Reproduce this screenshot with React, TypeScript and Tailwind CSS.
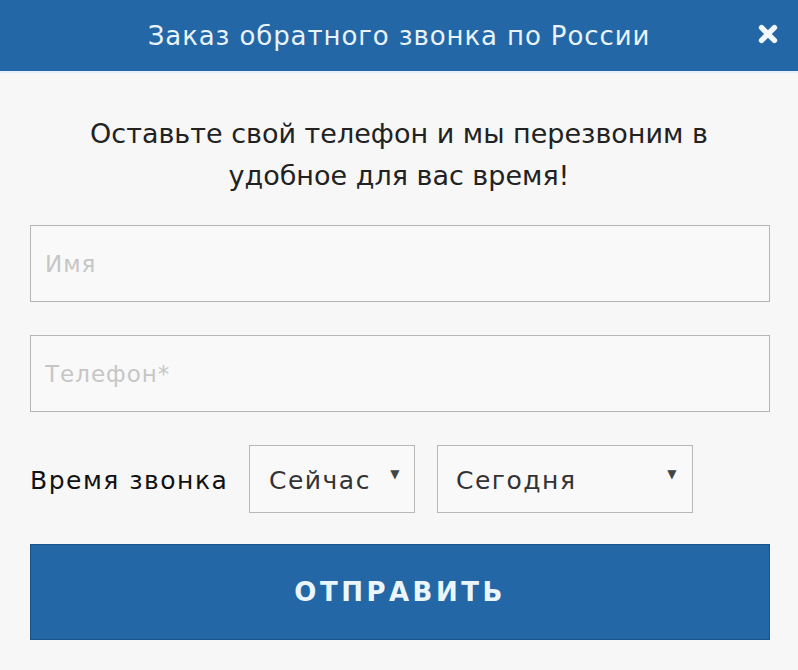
export default function App() {
  return (
    <div className="w-[798px] h-[670px] bg-[#f7f7f7] font-['DejaVu_Sans',sans-serif]">
      <div className="h-[73px] bg-[#2467a6] border-b-2 border-[#e4f1f8] flex items-center justify-center relative">
        <h1 className="text-[#e8f3f8] text-[26px] tracking-[0.9px] pt-[2px]">
          Заказ обратного звонка по России
        </h1>
        <button className="absolute right-[18px] top-[22px] w-[24px] h-[24px] flex items-center justify-center">
          <svg viewBox="0 0 24 24" width="22" height="22">
            <path d="M5 5 L19 19 M19 5 L5 19" stroke="#f1f7fb" strokeWidth="6" strokeLinecap="round" />
          </svg>
        </button>
      </div>

      <div className="px-[30px] pt-[40px]">
        <p className="text-center text-[#222] text-[27px] leading-[42px]">
          Оставьте свой телефон и мы перезвоним в<br />удобное для вас время!
        </p>

        <div className="mt-[28px] flex flex-col gap-[33px]">
          <input
            placeholder="Имя"
            className="w-[740px] h-[77px] bg-[#f9f9f9] border border-[#b5b5b5] px-[14px] text-[23px] tracking-[1px] placeholder:text-[#c6c6c6] outline-none"
          />
          <input
            placeholder="Телефон*"
            className="w-[740px] h-[77px] bg-[#f9f9f9] border border-[#b5b5b5] px-[14px] text-[23px] tracking-[1px] placeholder:text-[#c6c6c6] outline-none"
          />
        </div>

        <div className="mt-[33px] flex items-center tracking-[1.5px]">
          <span className="text-[25px] text-[#111] w-[219px] pt-[3px]">Время звонка</span>
          <div className="w-[166px] h-[68px] border border-[#b8b8b8] bg-[#f9f9f9] flex items-center pl-[19px] pt-[3px] relative">
            <span className="text-[25px] text-[#333]">Сейчас</span>
            <span className="absolute right-[13px] top-[19px] text-[12px] text-[#444]">▼</span>
          </div>
          <div className="ml-[22px] w-[256px] h-[68px] border border-[#b8b8b8] bg-[#f9f9f9] flex items-center pl-[18px] pt-[3px] relative">
            <span className="text-[25px] text-[#333]">Сегодня</span>
            <span className="absolute right-[14px] top-[19px] text-[12px] text-[#444]">▼</span>
          </div>
        </div>

        <button className="mt-[31px] w-[740px] h-[96px] bg-[#2467a6] border border-[#1c5389] flex items-center justify-center">
          <span className="text-[26px] font-bold tracking-[3.5px] text-[#eaf6fb]">
            ОТПРАВИТЬ
          </span>
        </button>
      </div>
    </div>
  );
}
